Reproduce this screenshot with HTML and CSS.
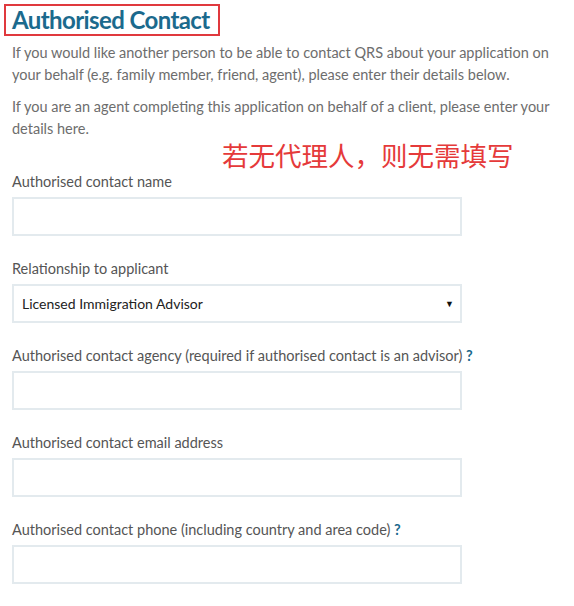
FILE: index.html
```html
<!DOCTYPE html>
<html lang="en">
<head>
    <meta charset="UTF-8">
    <title>Authorised Contact</title>
    <link rel="stylesheet" href="styles.css">
</head>
<body>
    <div class="section">
        <h2 class="section-title">Authorised Contact</h2>
        <p class="intro">If you would like another person to be able to contact QRS about your application on your behalf (e.g. family member, friend, agent), please enter their details below.</p>
        <p class="intro">If you are an agent completing this application on behalf of a client, please enter your details here.</p>

        <!-- annotation -->
        <div class="note">若无代理人，则无需填写</div>

        <div class="field">
            <label for="contact-name">Authorised contact name</label>
            <input type="text" id="contact-name">
        </div>

        <div class="field">
            <label for="contact-relationship">Relationship to applicant</label>
            <div class="select-box" id="contact-relationship">
                <span>Licensed Immigration Advisor</span>
                <span class="arrow">&#9660;</span>
            </div>
        </div>

        <div class="field">
            <label for="contact-agency">Authorised contact agency (required if authorised contact is an advisor) <span class="help">?</span></label>
            <input type="text" id="contact-agency">
        </div>

        <div class="field">
            <label for="contact-email">Authorised contact email address</label>
            <input type="text" id="contact-email">
        </div>

        <div class="field">
            <label for="contact-phone">Authorised contact phone (including country and area code) <span class="help">?</span></label>
            <input type="text" id="contact-phone">
        </div>
    </div>
</body>
</html>
```

FILE: styles.css
```css
/* General styling */
body {
    margin: 0;
    padding: 0;
    background: #fff;
    font-family: Lato, "Noto Sans", sans-serif;
    color: #555;
}
.section {
    padding: 4px 12px 0 12px;
}
.section-title {
    display: inline-block;
    margin: 0 0 0 -8px;
    padding: 0 8px 0 6px;
    height: 28px;
    line-height: 28px;
    border: 2px solid #e0393e;
    font-size: 24px;
    font-weight: bold;
    color: #1b6a8d;
    letter-spacing: -0.6px;
}
.intro {
    width: 555px;
    margin: 6px 0 10px 0;
    font-size: 14.5px;
    line-height: 22px;
    color: #6d6d6d;
}
.note {
    margin: -10px 0 1px 210px;
    font-family: "Noto Sans CJK SC", sans-serif;
    font-size: 26.5px;
    line-height: 30px;
    color: #e53a3a;
    white-space: nowrap;
}
/* Form fields */
.field {
    margin-bottom: 22px;
}
.field label {
    display: block;
    font-size: 14.5px;
    line-height: 22px;
    margin: 0 0 4px 0;
    color: #555;
    white-space: nowrap;
}
.field input,
.select-box {
    display: block;
    box-sizing: border-box;
    width: 450px;
    height: 39px;
    margin: 0;
    border: 2px solid #e3eaee;
    background: #fff;
}
.select-box {
    display: flex;
    justify-content: space-between;
    align-items: center;
    padding: 0 6px 0 8px;
    font-size: 14px;
    color: #222;
}
.select-box .arrow {
    font-size: 9px;
    color: #111;
}
.help {
    font-weight: bold;
    color: #1b6a8d;
}
```
